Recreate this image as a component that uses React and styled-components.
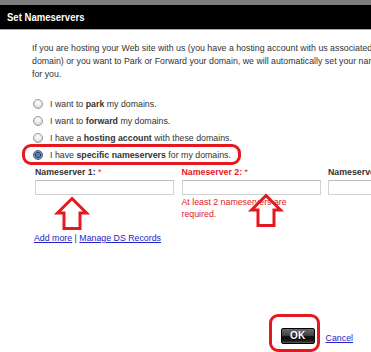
import React from "react";
import styled, { createGlobalStyle } from "styled-components";

const GlobalStyle = createGlobalStyle`
  html, body {
    margin: 0;
    padding: 0;
    background: #fff;
    overflow: hidden;
  }
  body {
    font-family: "Liberation Sans", Arial, sans-serif;
  }
`;

const RED = "#e3191f";

const Dialog = styled.div`
  width: 371px;
  height: 352px;
  overflow: hidden;
  background: #fff;
`;

const TopStrip = styled.div`
  height: 5px;
  background: #7d7d7d;
`;

const TitleBar = styled.div`
  height: 24px;
  background: #000;
  border-bottom: 1px solid #a9a9a9;
  display: flex;
  align-items: center;
  padding-left: 7px;
`;

const Title = styled.span`
  display: inline-block;
  color: #fff;
  font-family: "Liberation Sans", Arial, sans-serif;
  font-weight: bold;
  font-size: 11.5px;
  transform: scaleX(0.83);
  transform-origin: left center;
  white-space: nowrap;
`;

const Body = styled.div`
  padding: 12px 0 0 32px;
  font-size: 8.8px;
  color: #333;
`;

const Intro = styled.p`
  margin: 0;
  line-height: 13px;
  white-space: nowrap;
`;

const Options = styled.div`
  margin-top: 14px;
  display: flex;
  flex-direction: column;
  align-items: flex-start;
`;

const Option = styled.label`
  position: relative;
  height: 17px;
  display: flex;
  align-items: center;
  gap: 7px;
  padding-left: 1px;

  ${(p) =>
    p.$marked &&
    `
    &::after {
      content: "";
      position: absolute;
      left: -10px;
      right: -10px;
      top: -2px;
      bottom: -2px;
      border: 3px solid ${RED};
      border-radius: 9px;
    }
  `}
`;

const Radio = styled.input.attrs({ type: "radio", name: "ns" })`
  appearance: none;
  margin: 0;
  width: 10px;
  height: 10px;
  box-sizing: border-box;
  border-radius: 50%;
  border: 1px solid #9a9a9a;
  background: radial-gradient(circle at 50% 35%, #fff 0%, #ececec 45%, #bcbcbc 100%);

  &:checked {
    border-color: #555d68;
    background: radial-gradient(circle, #3d86e0 0 1.8px, #1c3e74 2.6px, #7b8592 3.2px, #c3c8ce 100%);
  }
`;

const Fields = styled.div`
  display: grid;
  grid-template-columns: repeat(3, 146.5px);
  margin: 4px 0 0 3px;
`;

const Field = styled.div`
  display: flex;
  flex-direction: column;
  align-items: flex-start;
`;

const FieldLabel = styled.div`
  font-weight: bold;
  line-height: 11px;
  white-space: nowrap;
  color: ${(p) => (p.$error ? RED : "#333")};
`;

const Star = styled.span`
  color: ${RED};
  font-weight: normal;
`;

const InputWrap = styled.div`
  position: relative;
  margin-top: 1.5px;
`;

const TextInput = styled.input.attrs({ type: "text" })`
  display: block;
  width: 139px;
  height: 15px;
  box-sizing: border-box;
  margin: 0;
  border: 1px solid #d2d2d2;
  border-top-color: #bdbdbd;
  background: #fff;
`;

const ErrorText = styled.div`
  margin-top: 1px;
  width: 120px;
  line-height: 12px;
  color: ${RED};
`;

const Arrow = styled.svg`
  position: absolute;
  left: ${(p) => p.$left}px;
  top: calc(100% + ${(p) => p.$top}px);
  width: 32px;
  height: 33px;
  overflow: visible;
`;

const Links = styled.div`
  margin: 12px 0 0 2px;
  line-height: 12px;
`;

const Link = styled.a`
  color: #2323c8;
  text-decoration: underline;
  cursor: pointer;
`;

const Footer = styled.div`
  margin-top: 84px;
  padding-right: 18px;
  display: flex;
  justify-content: flex-end;
  align-items: flex-end;
  gap: 11px;
  line-height: 12px;
`;

const Highlight = styled.span`
  position: relative;
  display: inline-flex;

  &::after {
    content: "";
    position: absolute;
    left: -12px;
    right: -5px;
    top: -14px;
    bottom: -8px;
    border: 3px solid ${RED};
    border-radius: 9px;
  }
`;

const OkButton = styled.button`
  width: 34px;
  height: 16px;
  padding: 0;
  border: 1px solid #000;
  border-radius: 2px;
  background: linear-gradient(
    to bottom,
    #6a6a6a 0%,
    #444 45%,
    #0c0c0c 55%,
    #1b1b1b 85%,
    #5a5a5a 100%
  );
  color: #fff;
  font-family: "Liberation Sans", Arial, sans-serif;
  font-weight: bold;
  font-size: 10px;
  line-height: 14px;
  text-shadow: 0 1px 0 #000;
`;

const UpArrow = ({ left, top }) => (
  <Arrow $left={left} $top={top} viewBox="0 0 32 33">
    <path
      d="M16 1.5 L30.5 16 L24 16 L24 31.5 L8 31.5 L8 16 L1.5 16 Z"
      fill="none"
      stroke={RED}
      strokeWidth="3"
      strokeLinejoin="miter"
    />
  </Arrow>
);

const choices = [
  { pre: "I want to ", bold: "park", post: " my domains." },
  { pre: "I want to ", bold: "forward", post: " my domains." },
  { pre: "I have a ", bold: "hosting account", post: " with these domains." },
  { pre: "I have ", bold: "specific nameservers", post: " for my domains.", checked: true },
];

export default function App() {
  return (
    <Dialog>
      <GlobalStyle />
      <TopStrip />
      <TitleBar>
        <Title>Set Nameservers</Title>
      </TitleBar>
      <Body>
        <Intro>
          If you are hosting your Web site with us (you have a hosting account
          with us associated with this
          <br />
          domain) or you want to Park or Forward your domain, we will
          automatically set your nameservers
          <br />
          for you.
        </Intro>

        <Options>
          {choices.map((c) => (
            <Option key={c.bold} $marked={c.checked}>
              <Radio defaultChecked={c.checked} />
              <span>
                {c.pre}
                <b>{c.bold}</b>
                {c.post}
              </span>
            </Option>
          ))}
        </Options>

        <Fields>
          <Field>
            <FieldLabel>
              Nameserver 1: <Star>*</Star>
            </FieldLabel>
            <InputWrap>
              <TextInput />
              <UpArrow left={21} top={2} />
            </InputWrap>
          </Field>
          <Field>
            <FieldLabel $error>
              Nameserver 2: <Star>*</Star>
            </FieldLabel>
            <InputWrap>
              <TextInput />
              <UpArrow left={68} top={-1} />
            </InputWrap>
            <ErrorText>At least 2 nameservers are required.</ErrorText>
          </Field>
          <Field>
            <FieldLabel>Nameserver 3:</FieldLabel>
            <InputWrap>
              <TextInput />
            </InputWrap>
          </Field>
        </Fields>

        <Links>
          <Link>Add more</Link> | <Link>Manage DS Records</Link>
        </Links>

        <Footer>
          <Highlight>
            <OkButton type="button">OK</OkButton>
          </Highlight>
          <Link>Cancel</Link>
        </Footer>
      </Body>
    </Dialog>
  );
}
